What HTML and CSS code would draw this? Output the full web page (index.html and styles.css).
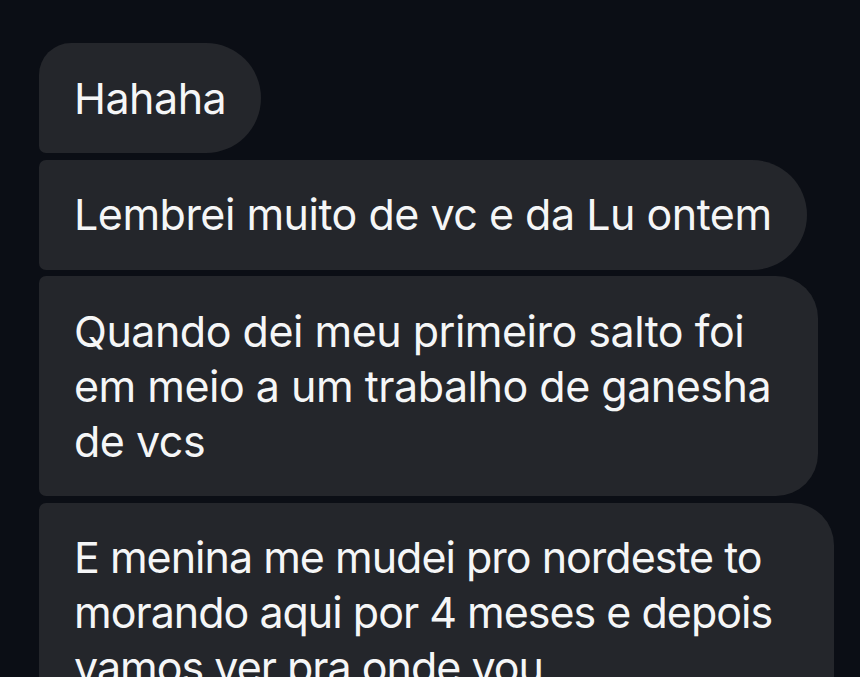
FILE: index.html
```html
<!DOCTYPE html>
<html lang="pt-BR">
<head>
<meta charset="utf-8">
<title>Mensagens</title>
<link rel="stylesheet" href="styles.css">
</head>
<body>
<main class="thread">
  <div class="bubble bubble--first">Hahaha</div>
  <div class="bubble bubble--pill">Lembrei muito de vc e da Lu ontem</div>
  <div class="bubble bubble--wide">Quando dei meu primeiro salto foi em meio a um trabalho de ganesha de vcs</div>
  <div class="bubble bubble--wider">E menina me mudei pro nordeste to morando aqui por 4 meses e depois vamos ver pra onde vou</div>
</main>
</body>
</html>
```
FILE: styles.css
```css
html, body {
  margin: 0;
  padding: 0;
  height: 100%;
}
body {
  background: #0b0e15;
  overflow: hidden;
  font-family: "Inter", "Noto Sans", sans-serif;
  color: #f5f6f7;
}
.thread {
  display: flex;
  flex-direction: column;
  align-items: flex-start;
  gap: 6.5px;
  padding: 43px 0 0 39px;
}
.bubble {
  box-sizing: border-box;
  background: #24262b;
  font-size: 43px;
  line-height: 55px;
  letter-spacing: -0.5px;
  padding: 27.5px 35px;
  border-radius: 7px 42px 42px 7px;
  max-width: 779px;
}
.bubble--first {
  border-radius: 32px 55px 55px 7px;
}
.bubble--pill {
  border-radius: 7px 55px 55px 7px;
}
.bubble--wide {
  width: 779px;
}
.bubble--wider {
  width: 795px;
  max-width: 795px;
  letter-spacing: -1px;
  padding-right: 30px;
}
```
